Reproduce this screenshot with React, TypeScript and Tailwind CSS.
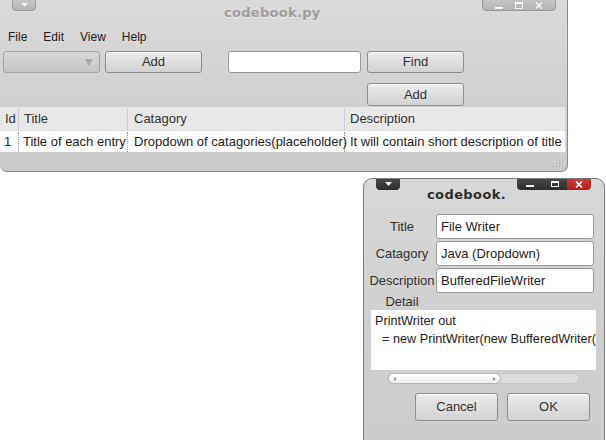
const btn =
  "flex items-center justify-center rounded-[3px] border border-[#8e8e8e] bg-gradient-to-b from-[#ececec] to-[#d2d2d2] text-[13px] text-[#333] shadow-[inset_0_1px_0_#fafafa]";

function MainWindow() {
  return (
    <div className="relative w-[568px] h-[172px] rounded-b-[7px] border-r border-b border-[#8a8a8a] bg-gradient-to-b from-[#dadada] to-[#cbcbcb] overflow-hidden">
      {/* window controls */}
      <div className="absolute left-[12px] top-[-3px] w-[24px] h-[14px] rounded-b-[4px] border border-[#9a9a9a] bg-gradient-to-b from-[#c8c8c8] to-[#b4b4b4] flex items-center justify-center pt-[2px]">
        <svg width="7" height="4" viewBox="0 0 7 4"><path d="M0 0h7L3.5 4z" fill="#f4f4f4" /></svg>
      </div>
      <div className="absolute left-[482px] top-[-3px] w-[74px] h-[14px] rounded-b-[4px] border border-[#9a9a9a] bg-gradient-to-b from-[#c8c8c8] to-[#b4b4b4] flex items-center justify-around px-[6px] pt-[3px]">
        <svg width="8" height="6" viewBox="0 0 8 6"><rect x="0" y="4" width="8" height="2" fill="#f4f4f4" /></svg>
        <svg width="8" height="7" viewBox="0 0 8 7"><rect x="0.5" y="0.5" width="7" height="6" fill="none" stroke="#f4f4f4" /><rect x="0" y="0" width="8" height="2" fill="#f4f4f4" /></svg>
        <svg width="8" height="7" viewBox="0 0 8 7"><path d="M1 0.5l6 6M7 0.5l-6 6" stroke="#f4f4f4" strokeWidth="1.6" /></svg>
      </div>

      <div className="h-[24px] flex items-center pl-[224px] pt-[1px]">
        <span className="font-['DejaVu_Sans',sans-serif] font-bold text-[13px] text-[#9c9c9c] [text-shadow:0_1px_0_#ececec] tracking-[0.3px]">
          codebook.py
        </span>
      </div>

      <div className="h-[24px] flex items-center gap-[16px] pl-[8px] pt-[2px] text-[12px] text-[#222]">
        <span>File</span>
        <span>Edit</span>
        <span>View</span>
        <span>Help</span>
      </div>

      <div className="mt-[3px] flex pl-[3px]">
        <div className="w-[97px] h-[22px] rounded-[3px] border border-[#a6a6a6] bg-gradient-to-b from-[#d8d8d8] to-[#c6c6c6] flex items-center justify-end pr-[6px]">
          <svg width="8" height="7" viewBox="0 0 8 7"><path d="M0 0h8L4 7z" fill="#a8a8a8" /></svg>
        </div>
        <div className={`${btn} ml-[5px] w-[97px] h-[22px]`}>Add</div>
        <div className="ml-[26px] w-[133px] h-[22px] rounded-[3px] border border-[#9a9a9a] bg-white" />
        <div className={`${btn} ml-[6px] w-[97px] h-[22px]`}>Find</div>
      </div>
      <div className="mt-[10px] flex pl-[367px]">
        <div className={`${btn} w-[97px] h-[23px]`}>Add</div>
      </div>

      <div className="mt-[1px] w-[566px] border-r border-[#d8d8d8]">
        <div className="flex h-[24px] bg-[#e8e8e8] text-[13px] text-[#333] border-b border-[#e0e0e0] pt-[1px]">
          <div className="w-[19px] pl-[5px] flex items-center border-r border-[#cfcfcf]">Id</div>
          <div className="w-[109px] pl-[5px] flex items-center border-r border-[#cfcfcf]">Title</div>
          <div className="w-[217px] pl-[6px] flex items-center border-r border-[#cfcfcf]">Catagory</div>
          <div className="flex-1 pl-[5px] flex items-center">Description</div>
        </div>
        <div className="flex h-[22px] bg-white text-[13px] text-[#222] border-b border-[#d0d0d0] whitespace-nowrap pt-[1px]">
          <div className="w-[19px] pl-[4px] flex items-center border-r border-dotted border-[#9a9a9a]">1</div>
          <div className="w-[109px] pl-[4px] flex items-center border-r border-dotted border-[#9a9a9a]">Title of each entry</div>
          <div className="w-[217px] pl-[6px] flex items-center border-r border-dotted border-[#9a9a9a]">Dropdown of catagories(placeholder)</div>
          <div className="flex-1 pl-[5px] flex items-center">It will contain short description of title</div>
        </div>
      </div>
      <svg className="absolute right-[3px] bottom-[3px]" width="11" height="11" viewBox="0 0 11 11">
        {[[9, 1], [9, 4], [6, 4], [9, 7], [6, 7], [3, 7], [9, 10], [6, 10], [3, 10], [0, 10]].map(([x, y], i) => (
          <rect key={i} x={x} y={y - 1} width="1" height="1" fill="#a8a8a8" />
        ))}
      </svg>
    </div>
  );
}

function Field({ label, value }: { label: string; value: string }) {
  return (
    <div className="flex items-center">
      <div className="w-[68px] text-center text-[13px] text-[#333]">{label}</div>
      <div className="w-[158px] h-[25px] rounded-[3px] border border-[#9a9a9a] bg-white flex items-center pl-[4px] text-[13px] text-[#222]">
        {value}
      </div>
    </div>
  );
}

function Dialog() {
  return (
    <div className="absolute left-[363px] top-[178px] w-[242px] h-[270px] rounded-t-[9px] border border-[#7c7c7c] bg-gradient-to-b from-[#d8d8d8] via-[#d0d0d0] to-[#cdcdcd] overflow-hidden">
      <div className="absolute left-[12px] top-[-1px] w-[24px] h-[12px] rounded-b-[4px] bg-gradient-to-b from-[#4a4a4a] to-[#2c2c2c] flex items-center justify-center">
        <svg width="7" height="4" viewBox="0 0 7 4"><path d="M0 0h7L3.5 4z" fill="#f0f0f0" /></svg>
      </div>
      <div className="absolute left-[153px] top-[-1px] w-[74px] h-[12px] rounded-b-[4px] overflow-hidden flex">
        <div className="w-[25px] bg-gradient-to-b from-[#4a4a4a] to-[#2c2c2c] flex items-center justify-center pt-[3px]">
          <svg width="8" height="4" viewBox="0 0 8 4"><rect x="0" y="1" width="8" height="2" fill="#f0f0f0" /></svg>
        </div>
        <div className="w-[25px] bg-gradient-to-b from-[#4a4a4a] to-[#2c2c2c] flex items-center justify-center">
          <svg width="8" height="6" viewBox="0 0 8 6"><rect x="0.5" y="0.5" width="7" height="5" fill="none" stroke="#f0f0f0" /><rect x="0" y="0" width="8" height="2" fill="#f0f0f0" /></svg>
        </div>
        <div className="w-[24px] bg-gradient-to-b from-[#d8383a] to-[#b01e20] flex items-center justify-center">
          <svg width="8" height="7" viewBox="0 0 8 7"><path d="M1 0.5l6 6M7 0.5l-6 6" stroke="#fff" strokeWidth="1.7" /></svg>
        </div>
      </div>

      <div className="h-[30px] flex items-start pl-[63px] pt-[6px]">
        <span className="font-['DejaVu_Sans',sans-serif] font-bold text-[13px] text-[#2e2e2e] tracking-[0.4px]">codebook.</span>
      </div>

      <div className="mt-[5px] pl-[4px] flex flex-col gap-[2px]">
        <Field label="Title" value="File Writer" />
        <Field label="Catagory" value="Java (Dropdown)" />
        <Field label="Description" value="BufferedFileWriter" />
      </div>
      <div className="pl-[4px] w-[72px] text-center text-[13px] text-[#333] h-[17px] leading-[17px]">Detail</div>
      <div className="ml-[7px] w-[225px] h-[60px] bg-white text-[12.7px] text-[#222] leading-[18px] pt-[2px] pl-[4px] whitespace-pre overflow-hidden">
        {"PrintWriter out\n  = new PrintWriter(new BufferedWriter("}
      </div>
      <div className="mt-[3px] ml-[24px] w-[191px] h-[11px] rounded-full border border-[#c8c8c8] bg-[#dedede] relative">
        <div className="absolute left-[-1px] top-[-1px] w-[113px] h-[11px] rounded-full border border-[#b4b4b4] bg-gradient-to-b from-white to-[#ececec] flex items-center justify-between px-[4px]">
          <svg width="3" height="4" viewBox="0 0 3 4"><path d="M3 0v4L0 2z" fill="#9a9a9a" /></svg>
          <svg width="3" height="4" viewBox="0 0 3 4"><path d="M0 0v4l3-2z" fill="#9a9a9a" /></svg>
        </div>
      </div>
      <div className="mt-[9px] flex pl-[51px] gap-[9px]">
        <div className={`${btn} w-[83px] h-[28px]`}>Cancel</div>
        <div className={`${btn} w-[83px] h-[28px]`}>OK</div>
      </div>
    </div>
  );
}

export default function App() {
  return (
    <div className="relative w-[606px] h-[440px] bg-white overflow-hidden font-['Liberation_Sans',Arial,sans-serif]">
      <MainWindow />
      <Dialog />
    </div>
  );
}
